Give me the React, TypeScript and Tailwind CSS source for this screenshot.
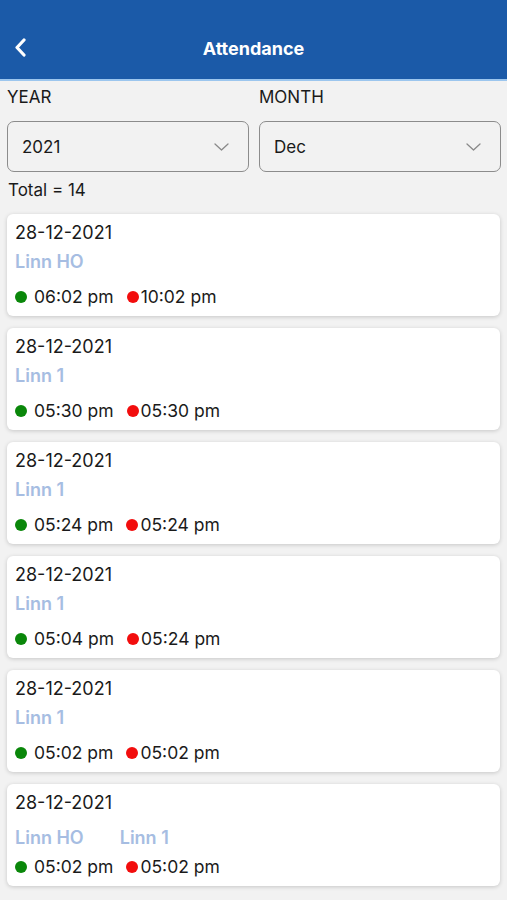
import React from "react";

type Record = {
  date: string;
  places: string[];
  timeIn: string;
  timeOut: string;
};

const records: Record[] = [
  { date: "28-12-2021", places: ["Linn HO"], timeIn: "06:02 pm", timeOut: "10:02 pm" },
  { date: "28-12-2021", places: ["Linn 1"], timeIn: "05:30 pm", timeOut: "05:30 pm" },
  { date: "28-12-2021", places: ["Linn 1"], timeIn: "05:24 pm", timeOut: "05:24 pm" },
  { date: "28-12-2021", places: ["Linn 1"], timeIn: "05:04 pm", timeOut: "05:24 pm" },
  { date: "28-12-2021", places: ["Linn 1"], timeIn: "05:02 pm", timeOut: "05:02 pm" },
  { date: "28-12-2021", places: ["Linn HO", "Linn 1"], timeIn: "05:02 pm", timeOut: "05:02 pm" },
];

const Chevron = () => (
  <svg width="15" height="8" viewBox="0 0 15 8" fill="none">
    <polyline points="1,1 7.5,7 14,1" stroke="#8a8a8a" strokeWidth="1.3" strokeLinecap="round" strokeLinejoin="round" />
  </svg>
);

const Select = ({ value }: { value: string }) => (
  <div className="h-[51px] flex items-center justify-between pl-[14px] pr-[19px] border-[1.5px] border-[#8c8c8c] rounded-[7px] bg-[#f2f2f2]">
    <span className="text-[17px] leading-5 text-[#1a1a1a]">{value}</span>
    <Chevron />
  </div>
);

const RecordCard = ({ item }: { item: Record }) => {
  const multi = item.places.length > 1;
  return (
    <div className="h-[102px] bg-white rounded-[6px] shadow-[0_1px_4px_rgba(0,0,0,0.18)] px-2 pt-[9px] pb-[9px]">
      <p className="text-[18px] leading-5 text-[#1a1a1a]">{item.date}</p>
      <div className={`flex gap-9 ${multi ? "mt-[15px]" : "mt-[9px]"}`}>
        {item.places.map((p, i) => (
          <span key={i} className="text-[18px] leading-5 font-semibold text-[#a6bde2]">
            {p}
          </span>
        ))}
      </div>
      <div className={`flex items-center text-[17.5px] leading-5 text-[#1a1a1a] ${multi ? "mt-[9px]" : "mt-[15px]"}`}>
        <span className="w-3 h-3 rounded-full bg-[#0a870a]"></span>
        <span className="ml-[7px]">{item.timeIn}</span>
        <span className="ml-[13px] w-3 h-3 rounded-full bg-[#f20d0d]"></span>
        <span className="ml-[2px]">{item.timeOut}</span>
      </div>
    </div>
  );
};

export default function App() {
  return (
    <div className="w-[507px] h-[900px] overflow-hidden bg-[#f2f2f2] font-['Inter',sans-serif]">
      {/* HEADER */}
      <div className="h-[81px] bg-[#1b5aa8] border-b-2 border-[#9cc6ee] pt-[36px]">
        <div className="relative h-6 flex items-center justify-center">
          <svg className="absolute left-[13px] top-[2px]" width="16" height="19" viewBox="0 0 16 19" fill="none">
            <polyline points="11,2 4,9.5 11,17" stroke="white" strokeWidth="3.2" strokeLinecap="round" strokeLinejoin="round" />
          </svg>
          <h1 className="text-white text-[18px] font-bold">Attendance</h1>
        </div>
      </div>

      {/* FILTERS */}
      <div className="grid grid-cols-2 gap-[10px] pl-[7px] pr-[6px] pt-[6px]">
        <div>
          <p className="text-[17px] leading-5 text-[#1a1a1a]">YEAR</p>
          <div className="mt-[14px]">
            <Select value="2021" />
          </div>
        </div>
        <div>
          <p className="text-[17px] leading-5 text-[#1a1a1a]">MONTH</p>
          <div className="mt-[14px]">
            <Select value="Dec" />
          </div>
        </div>
      </div>
      <p className="px-2 mt-2 text-[17px] leading-5 text-[#1a1a1a]">Total = 14</p>

      {/* LIST */}
      <div className="flex flex-col gap-3 pl-[7px] pr-[7px] mt-[14px]">
        {records.map((r, i) => (
          <RecordCard key={i} item={r} />
        ))}
      </div>
    </div>
  );
}
